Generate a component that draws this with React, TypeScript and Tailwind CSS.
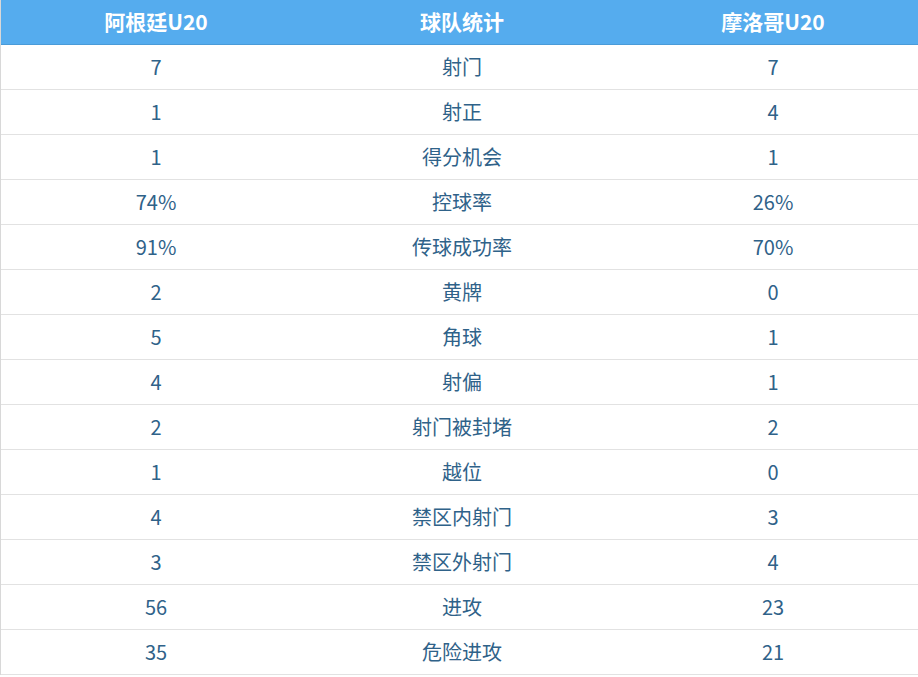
const rows: [string, string, string][] = [
  ["7", "射门", "7"],
  ["1", "射正", "4"],
  ["1", "得分机会", "1"],
  ["74%", "控球率", "26%"],
  ["91%", "传球成功率", "70%"],
  ["2", "黄牌", "0"],
  ["5", "角球", "1"],
  ["4", "射偏", "1"],
  ["2", "射门被封堵", "2"],
  ["1", "越位", "0"],
  ["4", "禁区内射门", "3"],
  ["3", "禁区外射门", "4"],
  ["56", "进攻", "23"],
  ["35", "危险进攻", "21"],
];

export default function App() {
  return (
    <div
      className="w-[918px] h-[677px] overflow-hidden bg-white"
      style={{ fontFamily: '"Noto Sans CJK SC", "Noto Sans", sans-serif' }}
    >
      <div className="w-[932px] border-l border-[#d8d8d8]">
        <div className="grid grid-cols-[310px_302px_320px] h-[45px] items-center bg-[#55acee] border-b border-[#4a9bd8] text-white text-[21px] font-bold text-center">
          <div>阿根廷U20</div>
          <div>球队统计</div>
          <div>摩洛哥U20</div>
        </div>
        {rows.map((r, i) => (
          <div
            key={i}
            className="grid grid-cols-[310px_302px_320px] h-[45px] items-center border-b border-[#e2e2e2] text-[#2f6289] text-[20px] text-center"
          >
            <div>{r[0]}</div>
            <div>{r[1]}</div>
            <div>{r[2]}</div>
          </div>
        ))}
      </div>
    </div>
  );
}
